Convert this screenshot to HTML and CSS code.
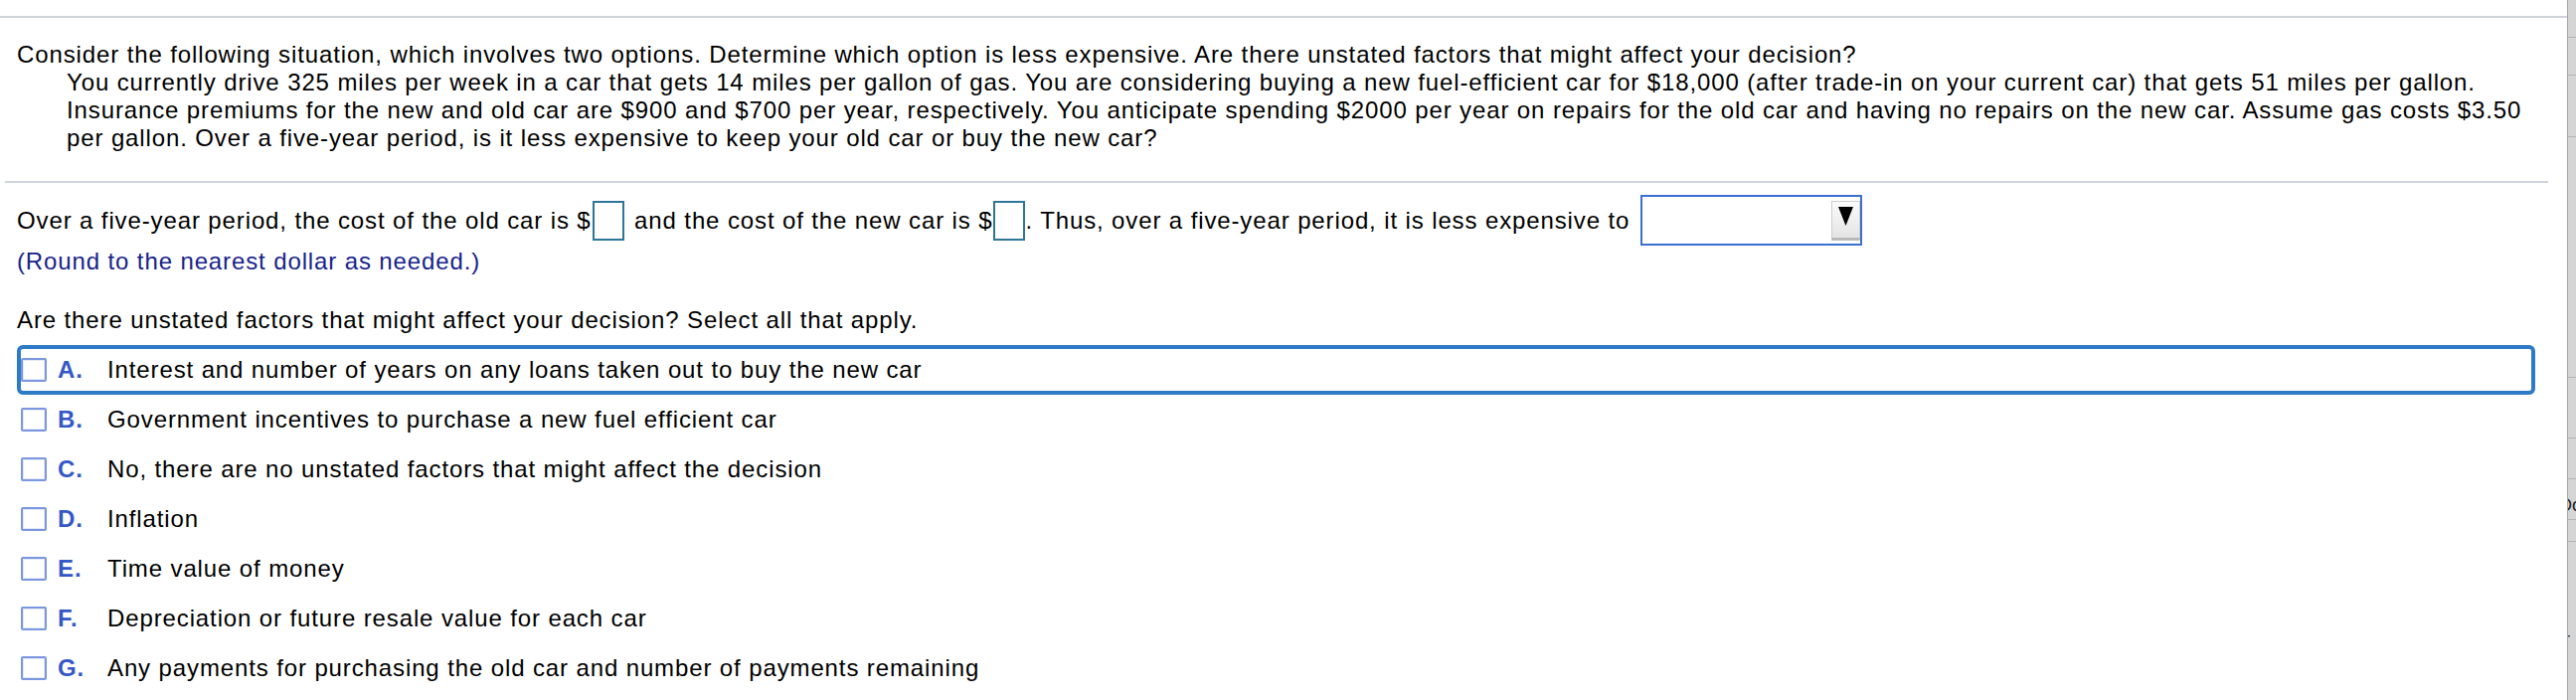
FILE: index.html
```html
<!DOCTYPE html>
<html>
<head>
<meta charset="utf-8">
<title>Question</title>
<link rel="stylesheet" href="styles.css">
</head>
<body>
<div class="frame">
  <main class="page">
    <div class="topline"></div>
    <section class="question">
      <p class="lead">Consider the following situation, which involves two options. Determine which option is less expensive. Are there unstated factors that might affect your decision?</p>
      <p class="scenario">You currently drive 325 miles per week in a car that gets 14 miles per gallon of gas. You are considering buying a new fuel-efficient car for $18,000 (after trade-in on your current car) that gets 51 miles per gallon. Insurance premiums for the new and old car are $900 and $700 per year, respectively. You anticipate spending $2000 per year on repairs for the old car and having no repairs on the new car. Assume gas costs $3.50 per gallon. Over a five-year period, is it less expensive to keep your old car or buy the new car?</p>
    </section>
    <div class="sep"></div>
    <section class="answer">
      <div class="fill-row">
        <span class="seg">Over a five-year period, the cost of the old car is $</span>
        <span class="blank blank-first"></span>
        <span class="seg"> and the cost of the new car is $</span>
        <span class="blank"></span>
        <span class="seg">. Thus, over a five-year period, it is less expensive to </span>
        <span class="select">
          <span class="select-btn">
            <svg width="15" height="19" viewBox="0 0 15 19"><polygon points="0,0 15,0 7.5,19" fill="#000"/></svg>
          </span>
        </span>
      </div>
      <p class="hint">(Round to the nearest dollar as needed.)</p>
      <p class="prompt">Are there unstated factors that might affect your decision? Select all that apply.</p>
      <ul class="options">
        <li class="option focused"><span class="check"></span><span class="letter">A.</span><span class="text">Interest and number of years on any loans taken out to buy the new car</span></li>
        <li class="option"><span class="check"></span><span class="letter">B.</span><span class="text">Government incentives to purchase a new fuel efficient car</span></li>
        <li class="option"><span class="check"></span><span class="letter">C.</span><span class="text">No, there are no unstated factors that might affect the decision</span></li>
        <li class="option"><span class="check"></span><span class="letter">D.</span><span class="text">Inflation</span></li>
        <li class="option"><span class="check"></span><span class="letter">E.</span><span class="text">Time value of money</span></li>
        <li class="option"><span class="check"></span><span class="letter">F.</span><span class="text">Depreciation or future resale value for each car</span></li>
        <li class="option"><span class="check"></span><span class="letter">G.</span><span class="text">Any payments for purchasing the old car and number of payments remaining</span></li>
      </ul>
    </section>
  </main>
  <aside class="strip">
    <div class="cell h38"></div>
    <div class="cell h38"></div>
    <div class="cell h62"></div>
    <div class="cell h242"></div>
    <div class="cell h61"></div>
    <div class="cell h41"></div>
    <div class="cell h41"><span class="frag-text">Do</span></div>
    <div class="cell h22"></div>
    <div class="cell rest"><span class="frag-text frag-low">r</span></div>
  </aside>
</div>
</body>
</html>
```

FILE: styles.css
```css
html, body {
  margin: 0;
  padding: 0;
  background: #ffffff;
}

body {
  font-family: "Liberation Sans", Arial, Helvetica, sans-serif;
  color: #000000;
}

.frame {
  display: flex;
  height: 704px;
  overflow: hidden;
}

.page {
  flex: 1;
  min-width: 0;
  padding-right: 19px;
}

.topline {
  margin-top: 16px;
  margin-right: -19px;
  height: 2px;
  background: #cfd3de;
}

.question {
  padding: 23px 0 0 17px;
  font-size: 24px;
  line-height: 28px;
  letter-spacing: 0.88px;
}

.question p {
  margin: 0;
}

.question .scenario {
  margin-left: 50px;
}

.sep {
  margin: 29px 0 0 5px;
  height: 2px;
  background: #cfd3de;
}

.answer {
  padding-left: 17px;
  font-size: 24px;
  line-height: 28px;
  letter-spacing: 0.88px;
}

.fill-row {
  display: flex;
  align-items: center;
  height: 51px;
  margin-top: 12px;
}

.seg {
  white-space: pre;
}

.blank {
  flex: none;
  box-sizing: border-box;
  width: 32px;
  height: 40px;
  border: 2px solid #2e7699;
  background: #ffffff;
  margin-left: 1px;
}

.blank-first {
  margin-right: 3px;
}

.select {
  flex: none;
  box-sizing: border-box;
  width: 223px;
  height: 51px;
  border: 2px solid #3d6fd1;
  margin-left: 3px;
  padding-top: 4px;
  display: flex;
  justify-content: flex-end;
  align-items: flex-start;
  background: #ffffff;
}

.select-btn {
  box-sizing: border-box;
  width: 29px;
  height: 40px;
  background: linear-gradient(#fbfbfb, #e4e4e4);
  border: 1px solid #cccccc;
  border-bottom: 3px solid #b9b9b9;
  display: flex;
  justify-content: center;
  align-items: flex-start;
  padding-top: 5px;
}

.select-btn svg {
  display: block;
}

.hint {
  margin: 2px 0 0;
  color: #17238c;
}

.prompt {
  margin: 31px 0 0;
}

.options {
  list-style: none;
  margin: 11px 13px 0 0;
  padding: 0;
}

.option {
  display: flex;
  align-items: center;
  box-sizing: border-box;
  height: 50px;
  border: 4px solid transparent;
  border-radius: 6px;
}

.option.focused {
  border-color: #2f7ac6;
}

.check {
  flex: none;
  box-sizing: border-box;
  width: 26px;
  height: 24px;
  border: 2px solid #7b97e0;
  border-radius: 2px;
  background: #ffffff;
  box-shadow: inset 0 0 0 1px #e4eafa;
}

.letter {
  flex: none;
  width: 50px;
  margin-left: 11px;
  font-weight: bold;
  color: #3558c8;
}

.text {
  white-space: nowrap;
}

.strip {
  flex: none;
  width: 9px;
  box-sizing: border-box;
  background: #d5d5d5;
  border-left: 1px solid #a6a6a6;
  overflow: hidden;
}

.cell {
  box-sizing: border-box;
  border-bottom: 1px solid #b4b4b4;
  overflow: hidden;
}

.h38 { height: 38px; }
.h62 { height: 62px; }
.h242 { height: 242px; }
.h61 { height: 61px; }
.h41 { height: 41px; }
.h22 { height: 22px; }
.rest { height: 160px; border-bottom: none; }

.frag-text {
  display: block;
  margin-left: -9px;
  font-size: 18px;
  line-height: 18px;
  color: #222222;
  padding-top: 17px;
  white-space: nowrap;
}

.frag-low {
  margin-left: -4px;
  padding-top: 89px;
}
```
